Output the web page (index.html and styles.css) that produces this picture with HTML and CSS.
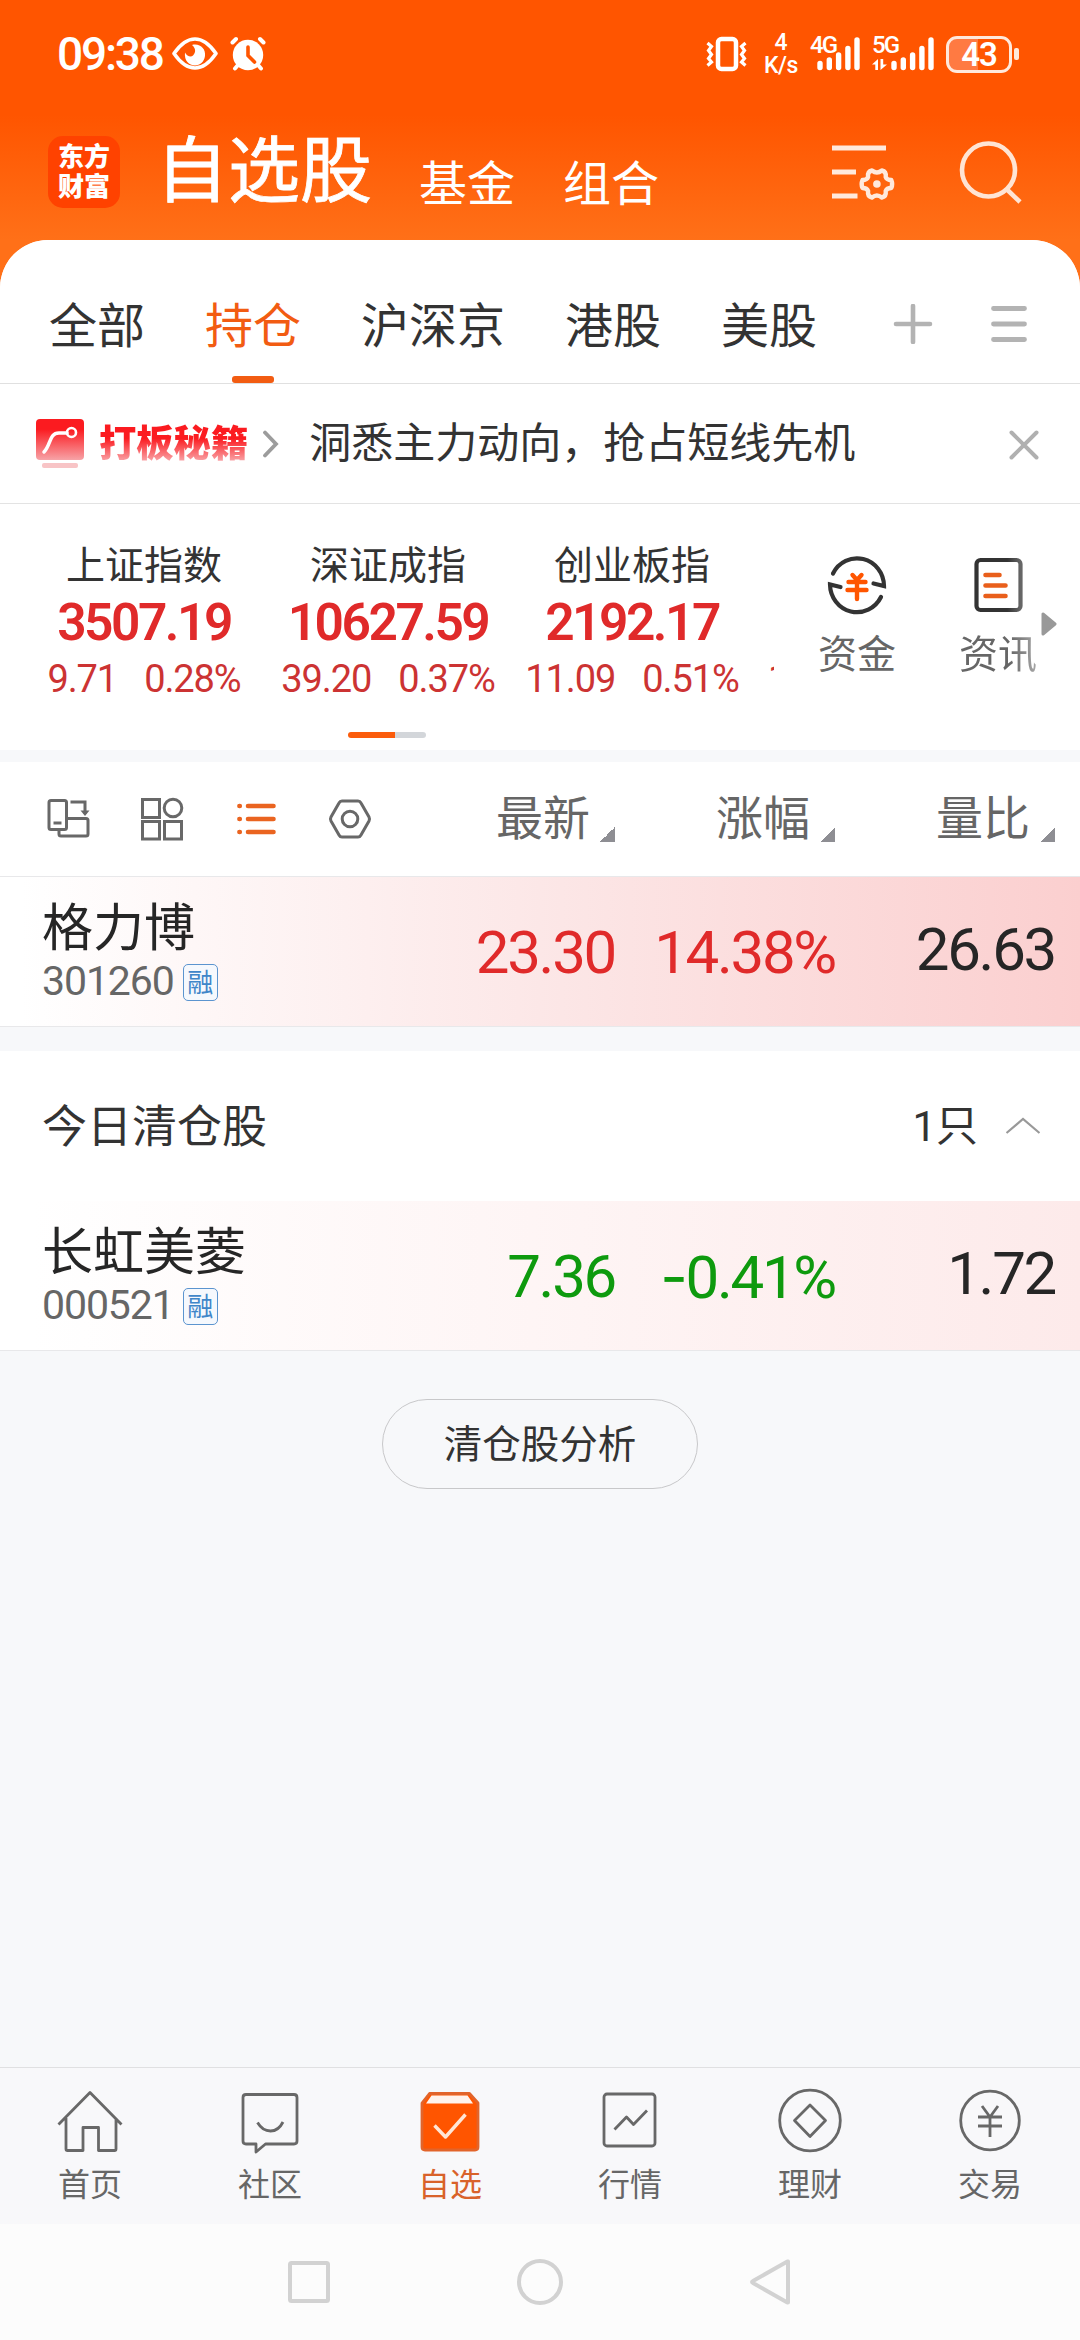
FILE: index.html
```html
<!DOCTYPE html>
<html lang="zh-CN">
<head>
<meta charset="utf-8">
<title>自选股</title>
<link rel="stylesheet" href="styles.css">
</head>
<body>
<div class="app">
  <div class="status">
    <span class="clock">09:38</span>
    <svg class="eye" width="46" height="34" viewBox="0 0 46 34"><path d="M2 16.500Q12 2 23 2T44 16.500Q34 31 23 31T2 16.500Z" fill="none" stroke="#fff" stroke-width="3.600" stroke-linejoin="round"/><path d="M20 8c8-2 14 4 13 11-1 6-5 9.500-10 9.500-6 0-11-5-10-13 2 4 6 5 8 3 3-3 3-7-1-10.500Z" fill="#fff"/></svg>
    <svg class="alarm" width="36" height="36" viewBox="0 0 36 36"><g stroke="#fff" stroke-width="4" stroke-linecap="round"><path d="M2.500 6.500 6 3M33.500 6.500 30 3M8 29l-3 3.500M28 29l3 3.500"/></g><circle cx="18" cy="19" r="15.200" fill="#fff"/><path d="M18 11v8.500l6.500 6.500" fill="none" stroke="#ff5500" stroke-width="3.600" stroke-linecap="round"/></svg>
    <span class="grow"></span>
    <svg class="vibrate" width="43" height="36" viewBox="0 0 43 36"><rect x="13" y="3" width="18" height="30" rx="3.500" fill="none" stroke="#fff" stroke-width="4.500"/><path d="M2.500 7l4 3.500-3 4 3 4-3 4 3 3.500-4 3.500M40.500 7l-4 3.500 3 4-3 4 3 4-3 3.500 4 3.500" fill="none" stroke="#fff" stroke-width="3.200"/></svg>
    <span class="speed"><b>4</b><span>K/s</span></span>
    <span class="signal four"><b>4G</b><svg width="50" height="36" viewBox="0 0 50 36"><path d="M10 27.500v4M19.300 24v7.500M28.600 19v12.500M37.900 12.500v19M47 4v27.500" stroke="#fff" stroke-width="5.400" stroke-linecap="round"/></svg></span>
    <span class="signal five"><b>5G</b><svg width="62" height="36" viewBox="0 0 62 36"><path d="M22 27.500v4M31.300 24v7.500M40.600 19v12.500M49.900 12.500v19M59 4v27.500" stroke="#fff" stroke-width="5.400" stroke-linecap="round"/><path d="M0 28.500l6-5.500v11H3.300v-5.500zM8.500 23h2.700v5.500H15L8.500 34z" fill="#fff"/></svg></span>
    <span class="battery"><span>43</span></span><i class="cap"></i>
  </div>

  <header class="header">
    <div class="logo"><span>东方</span><span>财富</span></div>
    <h1 class="title">自选股</h1>
    <a class="sub">基金</a>
    <a class="sub">组合</a>
    <span class="grow"></span>
    <svg class="filter" width="64" height="60" viewBox="0 0 64 60"><path d="M0 4h54M0 28h24M0 52h25.500" stroke="#ffe9dc" stroke-width="5"/><path d="M40 26.500Q44.900 30.500 49.800 26.500Q54.500 27.500 53.700 33Q54.800 36 59.300 36Q61 40 59.300 44Q54.800 44 53.700 47Q54.500 52.500 49.800 53.500Q44.900 49.500 40 53.500Q35.300 52.500 36.100 47Q35 44 30.500 44Q28.800 40 30.500 36Q35 36 36.100 33Q35.300 27.500 40 26.500Z" fill="none" stroke="#ffe9dc" stroke-width="4.400" stroke-linejoin="round"/><circle cx="44.900" cy="40" r="3.800" fill="#ffe9dc"/></svg>
    <svg class="search" width="64" height="64" viewBox="0 0 64 64"><circle cx="29.500" cy="30" r="26.500" fill="none" stroke="#ffe4d4" stroke-width="4.600"/><path d="M48 49.500 61 62" stroke="#ffe4d4" stroke-width="4.600"/></svg>
  </header>

  <main class="sheet">
    <nav class="tabs">
      <a>全部</a><a class="on">持仓</a><a>沪深京</a><a>港股</a><a>美股</a>
      <span class="grow"></span>
      <svg class="plus" width="40" height="40" viewBox="0 0 40 40"><path d="M20 2v36M3 20h34" stroke="#b3b3b3" stroke-width="4.600" stroke-linecap="round"/></svg>
      <svg class="menu" width="36" height="38" viewBox="0 0 36 38"><path d="M2.500 3.500h31M2.500 19h31M2.500 34.500h31" stroke="#b3b3b3" stroke-width="4.800" stroke-linecap="round"/></svg>
    </nav>

    <div class="promo">
      <svg width="48" height="50" viewBox="0 0 48 50"><defs><linearGradient id="red" x1="0" y1="0" x2="0" y2="1"><stop offset=".25" stop-color="#fb1b20"/><stop offset="1" stop-color="#f7a3a7"/></linearGradient></defs><rect width="48" height="41" rx="4" fill="url(#red)"/><rect x="6" y="44" width="36" height="5" rx="2" fill="#f8c4c6"/><path d="M8 33c7-7 5-19 15-19h8" fill="none" stroke="#fff" stroke-width="3.500" stroke-linecap="round"/><circle cx="35.500" cy="13.500" r="4.500" fill="none" stroke="#fff" stroke-width="2.600"/></svg>
      <strong>打板秘籍</strong>
      <svg class="go" width="17" height="28" viewBox="0 0 17 28"><path d="M3 2.500 14 14 3 25.500" fill="none" stroke="#9c9c9c" stroke-width="3.800" stroke-linecap="round"/></svg>
      <span class="message">洞悉主力动向，抢占短线先机</span>
      <span class="grow"></span>
      <svg class="close" width="30" height="30" viewBox="0 0 30 30"><path d="M2.500 2.500l25 25M27.500 2.500l-25 25" stroke="#b0b0b0" stroke-width="4" stroke-linecap="round"/></svg>
    </div>

    <section class="market">
      <div class="indices">
        <div class="index"><span class="name">上证指数</span><b>3507.19</b><p><span>9.71</span><span>0.28%</span></p></div>
        <div class="index"><span class="name">深证成指</span><b>10627.59</b><p><span>39.20</span><span>0.37%</span></p></div>
        <div class="index"><span class="name">创业板指</span><b>2192.17</b><p><span>11.09</span><span>0.51%</span></p></div>
        <div class="index next"><p><span>1</span></p></div>
      </div>
      <a class="tool">
        <svg width="60" height="62" viewBox="0 0 60 62"><g fill="none" stroke="#333" stroke-width="4.200" stroke-linecap="round"><path d="M6 19.500A27 28 0 0 1 57 32l-10.500-2.500M54 43A27 28 0 0 1 3 30.500l10.500 2.500"/></g><path d="M25.500 21l4.500 5 4.500-5M30 27v18M21.500 28h17M20.500 36h19" fill="none" stroke="#ff5500" stroke-width="4.400" stroke-linecap="round"/></svg>
        <span>资金</span>
      </a>
      <a class="tool news">
        <svg width="60" height="62" viewBox="0 0 60 62"><defs><linearGradient id="edge"><stop offset=".7" stop-color="#333"/><stop offset="1" stop-color="#666"/></linearGradient></defs><rect x="8.500" y="6" width="44" height="50" rx="4" fill="none" stroke="url(#edge)" stroke-width="4.200"/><path d="M17.500 21h14M17.500 31.500h20M17.500 42h20" stroke="#e95f1b" stroke-width="4.600" stroke-linecap="round"/></svg>
        <span>资讯</span>
      </a>
      <svg class="more" width="16" height="26" viewBox="0 0 16 26"><path d="M2 3v20l12-10z" fill="#999" stroke="#999" stroke-width="3" stroke-linejoin="round"/></svg>
    </section>
    <div class="pager"><i></i></div>

    <section class="stocks">
      <div class="columns">
        <div class="views">
          <svg width="44" height="44" viewBox="0 0 44 44" fill="none" stroke="#686868" stroke-width="3"><rect x="3" y="3.500" width="17.500" height="29" rx="2"/><path d="M7.500 26h8" /><path d="M20.500 21.500H40a2 2 0 0 1 2 2V37a2 2 0 0 1-2 2H15a2 2 0 0 1-2-2v-4.500M24.500 5h14.500v12"/><path d="M34.500 13.500h9l-4.500 5.500z" fill="#686868" stroke="none"/></svg>
          <svg width="44" height="44" viewBox="0 0 44 44" fill="none" stroke="#686868" stroke-width="3"><rect x="2.500" y="2.500" width="17" height="18"/><circle cx="33" cy="11" r="8.800"/><rect x="2.500" y="24.500" width="17" height="17.500"/><rect x="24.500" y="24.500" width="17" height="17.500"/></svg>
          <svg width="44" height="44" viewBox="0 0 44 44" stroke="#ea6420" stroke-width="4.600" stroke-linecap="round"><path d="M14 9h25.500M14 22h25.500M14 35h25.500M5.400 9h.4M5.400 22h.4M5.400 35h.4"/></svg>
          <svg width="44" height="44" viewBox="0 0 44 44" fill="none" stroke="#686868" stroke-width="3"><path d="M14 4h16q2 0 3 2l8 14q1 2 0 4l-8 14q-1 2-3 2H14q-2 0-3-2L3 24q-1-2 0-4L11 6q1-2 3-2Z"/><circle cx="22" cy="22" r="7.800"/></svg>
        </div>
        <span class="col">最新<i></i></span><span class="col">涨幅<i></i></span><span class="col">量比<i></i></span>
      </div>
      <div class="row hot">
        <div class="stock"><span class="label">格力博</span><span class="code">301260<em>融</em></span></div>
        <span class="num up">23.30</span><span class="num up">14.38%</span><span class="num ratio">26.63</span>
      </div>
    </section>

    <section class="stocks">
      <div class="cleared"><span>今日清仓股</span><span class="count">1只</span><svg width="36" height="18" viewBox="0 0 36 18"><path d="M1.500 16 18 2l16.500 14" fill="none" stroke="#999" stroke-width="2.200"/></svg></div>
      <div class="row mild">
        <div class="stock"><span class="label">长虹美菱</span><span class="code">000521<em>融</em></span></div>
        <span class="num down">7.36</span><span class="num down"><span class="minus">-</span>0.41%</span><span class="num ratio">1.72</span>
      </div>
    </section>
    <button class="analyse">清仓股分析</button>
  </main>

  <nav class="bottom">
    <a><svg width="68" height="68" viewBox="0 0 68 68"><path d="M2.500 36.500 34 4.500l31.500 32M10 30v31q0 1.500 1.500 1.500H27V39.500h15.500v23h16q1.500 0 1.500-1.500V30"/></svg>首页</a>
    <a><svg width="68" height="68" viewBox="0 0 68 68"><path d="M10 6.500h48q3 0 3 3V53q0 3-3 3H29.500l-9.500 8v-8H10q-3 0-3-3V9.500q0-3 3-3ZM21.500 34.500q5 8.500 13 8.500t12.500-9"/></svg>社区</a>
    <a class="on"><svg width="68" height="68" viewBox="0 0 68 68"><path d="M13.500 5.500h40L62 15v44q0 3-3 3H9q-3 0-3-3V15Z" fill="#ff5500" stroke="#e2642a"/><path d="M15.500 7.500h36l5.500 8H10Z" fill="#fff3ec" stroke="none"/><path d="M18.500 37.500 29.500 49l20-22.500" fill="none" stroke="#ffe6d5" stroke-width="3.400"/></svg>自选</a>
    <a><svg width="68" height="68" viewBox="0 0 68 68"><rect x="8" y="6" width="51" height="52" rx="3"/><path d="M18.500 41.500 30.500 29l7 7.500L51 22.500"/></svg>行情</a>
    <a><svg width="68" height="68" viewBox="0 0 68 68"><circle cx="34" cy="32.500" r="30.300"/><path d="M34 17 49.500 32.500 34 48.500 18.500 32.500Z"/></svg>理财</a>
    <a><svg width="68" height="68" viewBox="0 0 68 68"><circle cx="34" cy="32.500" r="29.300"/><path d="M26 18l8 11 8-11M34 29v20M22 29h24M22 38h24"/></svg>交易</a>
  </nav>
  <div class="system">
    <svg width="48" height="48" viewBox="0 0 48 48"><rect x="5" y="5" width="38" height="38" rx="1.500"/></svg>
    <svg width="48" height="48" viewBox="0 0 48 48"><circle cx="24" cy="24" r="21"/></svg>
    <svg width="48" height="48" viewBox="0 0 48 48"><path d="M41 3.500v41q0 0-1.500-.5L6 25q-2-1 0-2L39.500 4Z"/></svg>
  </div>
</div>
</body>
</html>
```
FILE: styles.css
```css
* { box-sizing: border-box; }
body { margin: 0; }
h1, p { margin: 0; font-weight: inherit; }
svg { display: block; flex: none; }

.app {
  width: 1080px;
  height: 2340px;
  display: flex;
  flex-direction: column;
  overflow: hidden;
  font-family: Roboto, "Noto Sans CJK SC", sans-serif;
  color: #333;
  background: linear-gradient(#ff5500 115px, #ff7018 240px);
}
.grow { flex: 1; }

/* phone status bar */
.status {
  height: 108px;
  padding: 0 61px 0 57px;
  display: flex;
  align-items: center;
  color: #fff;
}
.clock { font-size: 46px; font-weight: 500; letter-spacing: -2.200px; line-height: 108px; width: 115px; }
.alarm { margin-left: 12px; }
.vibrate { margin-right: 13px; }
.speed { width: 40px; text-align: center; }
.speed b, .speed span { display: block; font-size: 23px; line-height: 23px; font-weight: 500; }
.speed span { letter-spacing: -.5px; }
.signal { position: relative; margin-left: 9px; }
.signal b { position: absolute; left: 0; top: 0; font-size: 24px; line-height: 18px; letter-spacing: -2px; font-weight: 500; }
.five { margin-left: 12px; }
.battery {
  width: 66px;
  height: 37px;
  margin-left: 12px;
  border: 3px solid #ffe9dc;
  border-radius: 11px;
  background: linear-gradient(90deg, #ff7a42 49%, transparent 49%);
  text-align: center;
  font-size: 33px;
  font-weight: 600;
  line-height: 31px;
  letter-spacing: -1px;
}
.cap { width: 5px; height: 12px; margin-left: 2px; border-radius: 2px; background: #ffe9dc; }

/* brand header */
.header {
  height: 132px;
  padding: 0 57px 0 48px;
  display: flex;
  align-items: center;
  color: #fff;
}
.logo {
  width: 72px;
  height: 72px;
  margin-bottom: 4px;
  padding-top: 6px;
  border-radius: 15px;
  background: #ff4200;
  font-size: 26px;
  font-weight: 900;
  line-height: 30px;
  text-align: center;
}
.logo span { display: block; }
.title { margin: 0 47px 0 36px; padding-bottom: 4px; font-size: 72px; font-weight: 400; -webkit-text-stroke: .8px #fff; line-height: 72px; }
.sub { font-size: 48px; line-height: 48px; padding-top: 21px; margin-right: 48px; }
.filter { margin-right: 63px; }
.search { margin-bottom: 4px; }

/* white sheet */
.sheet {
  flex: 1;
  display: flex;
  flex-direction: column;
  border-radius: 48px 48px 0 0;
  background: #f7f8fa;
}
.tabs {
  height: 144px;
  padding: 0 53px 0 49px;
  display: flex;
  align-items: center;
  border-bottom: 1px solid #e0e0e0;
  border-radius: 48px 48px 0 0;
  background: #fff;
}
.tabs a { position: relative; align-self: stretch; margin-right: 60px; padding-top: 34px; font-size: 48px; line-height: 105px; }
.tabs .on { color: #f25c12; }
.tabs .on::after {
  content: "";
  position: absolute;
  left: 27px;
  bottom: 0;
  width: 42px;
  height: 7px;
  border-radius: 3px;
  background: #f25c12;
}
.plus { margin: 24px 58px 0 0; }
.menu { margin-top: 24px; }

.promo {
  height: 120px;
  padding: 0 41px 0 36px;
  display: flex;
  align-items: center;
  border-bottom: 1px solid #e3e3e3;
  background: #fff;
}
.promo strong {
  margin-left: 15px;
  font-size: 37.300px;
  font-weight: 900;
  line-height: 50px;
  padding-top: 1px;
  color: transparent;
  background: linear-gradient(#fb1b20 40%, #f9a8ab 86%);
  -webkit-background-clip: text;
  background-clip: text;
}
.go { margin-left: 14px; }
.message { margin-left: 30px; font-size: 42px; line-height: 60px; }
.close { margin-top: 2px; }

/* index strip */
.market { height: 222px; display: flex; background: #fff; }
.indices { width: 774px; padding: 34px 0 0 22px; display: flex; overflow: hidden; flex: none; }
.index { width: 244px; flex: none; display: flex; flex-direction: column; align-items: center; color: #cc3333; }
.index .name { font-size: 39px; line-height: 56px; color: #333; }
.index b { font-size: 51.500px; line-height: 58px; height: 57px; letter-spacing: -2.500px; font-weight: 600; color: #e02a2a; }
.index p { display: flex; gap: 27px; margin-top: 3px; font-size: 38px; line-height: 50px; letter-spacing: -1.100px; }
.index.next { align-items: flex-start; padding: 113px 0 0 14px; }
.tool {
  margin-left: 38px;
  width: 90px;
  padding-top: 50px;
  display: flex;
  flex-direction: column;
  align-items: center;
  font-size: 39px;
  line-height: 50px;
  color: #666;
}
.tool span { margin-top: 14px; }
.news { margin-left: 51px; }
.news span { color: transparent; background: linear-gradient(90deg, #666 65%, #a8a8a8); -webkit-background-clip: text; background-clip: text; }
.more { margin: 107px 0 0 -2px; }
.pager { height: 36px; padding: 6px 0 0 348px; background: #fff; border-bottom: 12px solid #f7f8fa; }
.pager i { display: block; width: 78px; height: 6px; border-radius: 3px; background: linear-gradient(90deg, #fb5c0c 60%, #d3d6da 60%); }

/* watch list */
.stocks { margin-bottom: 24px; background: #fff; }
.columns, .row {
  display: grid;
  grid-template-columns: 1fr 220px 220px 220px;
  align-items: center;
  padding-right: 25px;
}
.columns { height: 115px; border-bottom: 1px solid #e8e8ea; }
.views { display: flex; gap: 50px; padding-left: 46px; }
.col { display: flex; justify-content: flex-end; font-size: 47px; line-height: 60px; color: #666; }
.col i { width: 15px; height: 15px; margin: 38px 0 0 10px; background: linear-gradient(135deg, transparent 50%, #8e8e93 50%); }
.row { height: 150px; border-bottom: 1px solid #e8e8ea; }
.hot { background: linear-gradient(90deg, #fff 2%, #fce7e7 50%, #fbcfcf); }
.mild { background: linear-gradient(90deg, #fff 3%, #fdeaea); }
.stock { padding: 4px 0 0 42px; display: flex; flex-direction: column; }
.label { font-size: 51px; line-height: 56px; color: #262626; white-space: nowrap; }
.code { display: flex; align-items: center; font-size: 41px; line-height: 49px; letter-spacing: -1.100px; color: #666; }
.code em {
  margin: 2px 0 0 9px;
  width: 35px;
  height: 37px;
  border: 1px solid #5b94cf;
  border-radius: 5px;
  background: #f5f8fd;
  color: #3f86c9;
  font-size: 26px;
  font-style: normal;
  line-height: 36px;
  letter-spacing: 0;
  text-align: center;
}
.num { font-size: 60px; line-height: 70px; letter-spacing: -2.300px; text-align: right; padding-top: 3px; white-space: nowrap; }
.up { color: #e02a2a; }
.down { color: #0e9a0e; }
.minus { font-family: Inter, sans-serif; }
.ratio { color: #262626; padding: 0 0 3px; }
.cleared { height: 150px; padding: 0 39px 0 42px; display: flex; align-items: center; font-size: 45px; line-height: 60px; }
.cleared span:first-child { flex: 1; padding-top: 4px; }
.cleared .count { font-size: 42px; padding-top: 2px; margin-right: 27px; }
.analyse {
  align-self: center;
  width: 316px;
  height: 90px;
  margin-top: 24px;
  border: 1px solid #c8c8ca;
  border-radius: 45px;
  background: transparent;
  font: 38.500px/86px Roboto, "Noto Sans CJK SC", sans-serif;
  color: #333;
  padding: 2px 0 0;
}

/* app navigation */
.bottom {
  height: 157px;
  display: grid;
  grid-template-columns: repeat(6, 180px);
  border-top: 1px solid #e0e0e2;
  background: #f8f8fa;
}
.bottom a { display: flex; flex-direction: column; align-items: center; padding-top: 20px; font-size: 32px; line-height: 50px; color: #666; gap: 4px; }
.bottom svg { fill: none; stroke: #686868; stroke-width: 2.800; stroke-linejoin: round; }
.bottom .on { color: #d9622a; }
.system { height: 116px; padding-top: 34px; display: flex; justify-content: center; gap: 183px; background: #fcfcfc; }
.system svg { fill: none; stroke: #d2d2d2; stroke-width: 4; stroke-linejoin: round; }
```
